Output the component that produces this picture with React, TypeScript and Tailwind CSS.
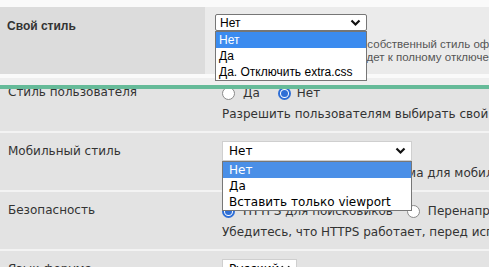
const Chevron = () => (
  <svg width="11" height="8" viewBox="0 0 11 8" className="shrink-0">
    <path d="M1.5 1.5 L5.5 5.5 L9.5 1.5" fill="none" stroke="#111" strokeWidth="2.2" />
  </svg>
);

const Radio = ({ checked }: { checked?: boolean }) =>
  checked ? (
    <span className="inline-flex w-[13px] h-[13px] rounded-full border-2 border-[#2f6fd6] bg-white items-center justify-center shrink-0">
      <span className="w-[7px] h-[7px] rounded-full bg-[#2f6fd6]" />
    </span>
  ) : (
    <span className="inline-block w-[13px] h-[13px] rounded-full border border-[#8a8a8a] bg-white shrink-0" />
  );

const Row = ({ label, children }: { label: string; children: React.ReactNode }) => (
  <div className="flex h-[59px] border-b-2 border-[#f3f3f3]">
    <div className="w-[222px] pl-2 pt-2 leading-[20px] shrink-0">{label}</div>
    <div className="flex-1 pt-2 relative whitespace-nowrap">{children}</div>
  </div>
);

export default function App() {
  return (
    <div className="w-[489px] h-[267px] overflow-hidden bg-[#e3e3e3]">
      {/* sticky header part */}
      <div className="relative z-20 bg-[#fafafa] pt-[7px] font-['Liberation_Sans',Arial,sans-serif]">
        <div className="flex h-[67px]">
          <div className="w-[205px] shrink-0 bg-[#dcdcdc] pl-[7px] pt-[10px] text-[12px] font-bold text-[#333]">
            Свой стиль
          </div>
          <div className="flex-1 min-w-0 bg-[#ebebeb] pl-[10px] pt-[7px] relative whitespace-nowrap">
            <div className="w-[152px] h-[17px] bg-white border border-[#767676] rounded-[2px] flex items-center justify-between pl-[4px] pr-[5px] text-[12px] text-black">
              <span>Нет</span>
              <Chevron />
            </div>
            <div className="mt-[7px] text-[11.5px] leading-[13px] text-[#555] overflow-hidden">
              <div>Позволит вам использовать собственный стиль оформления</div>
              <div>Третий вариант также приведет к полному отключению</div>
            </div>
            <div className="absolute top-[24px] left-[10px] w-[152px] bg-white border border-[#767676] text-[12px] text-black z-30">
              <div className="h-[16px] leading-[16px] pl-[3px] bg-[#3b8bef] text-white">Нет</div>
              <div className="h-[16px] leading-[16px] pl-[3px]">Да</div>
              <div className="h-[16px] leading-[16px] pl-[3px]">Да. Отключить extra.css</div>
            </div>
          </div>
        </div>
        <div className="h-[4px] bg-[#fafafa]" />
        <div className="h-[7px] bg-[#efefef]" />
        <div className="h-[4px] bg-[#66bb99]" />
      </div>

      {/* scrolled settings list */}
      <div className="h-[178px] overflow-hidden font-['DejaVu_Sans',Verdana,sans-serif] text-[12px] text-[#333]">
        <div className="-mt-[15px]">
          <Row label="Стиль пользователя">
            <div className="h-[22px] flex items-center">
              <Radio />
              <span className="ml-[8px]">Да</span>
              <span className="ml-[18px] flex"><Radio checked /></span>
              <span className="ml-[6px]">Нет</span>
            </div>
            <div className="leading-[20px]">Разрешить пользователям выбирать свой стиль</div>
          </Row>

          <Row label="Мобильный стиль">
            <div className="h-[22px]">
              <div className="w-[190px] h-[20px] bg-white border border-[#cfcfcf] flex items-center justify-between pl-[6px] pr-[5px] text-black">
                <span>Нет</span>
                <Chevron />
              </div>
            </div>
            <div className="leading-[20px]">Будет использоваться эта тема для мобильных устройств</div>
            <div className="absolute top-[28px] left-0 w-[190px] bg-white border border-[#777] text-black z-10">
              <div className="h-[16px] leading-[16px] pl-[6px] bg-[#4a8fe7] text-white">Нет</div>
              <div className="h-[16px] leading-[16px] pl-[6px]">Да</div>
              <div className="h-[16px] leading-[16px] pl-[6px]">Вставить только viewport</div>
            </div>
          </Row>

          <Row label="Безопасность">
            <div className="h-[22px] flex items-center">
              <Radio checked />
              <span className="ml-[8px]">HTTPS для поисковиков</span>
              <span className="ml-[14px] flex"><Radio /></span>
              <span className="ml-[8px]">Перенаправлять на HTTPS</span>
            </div>
            <div className="leading-[20px]">Убедитесь, что HTTPS работает, перед использованием</div>
          </Row>

          <Row label="Язык форума">
            <div className="h-[22px]">
              <div className="w-[75px] h-[20px] bg-white border border-[#cfcfcf] flex items-center justify-between pl-[6px] pr-[5px] text-black">
                <span>Русский</span>
                <Chevron />
              </div>
            </div>
          </Row>
        </div>
      </div>
    </div>
  );
}
